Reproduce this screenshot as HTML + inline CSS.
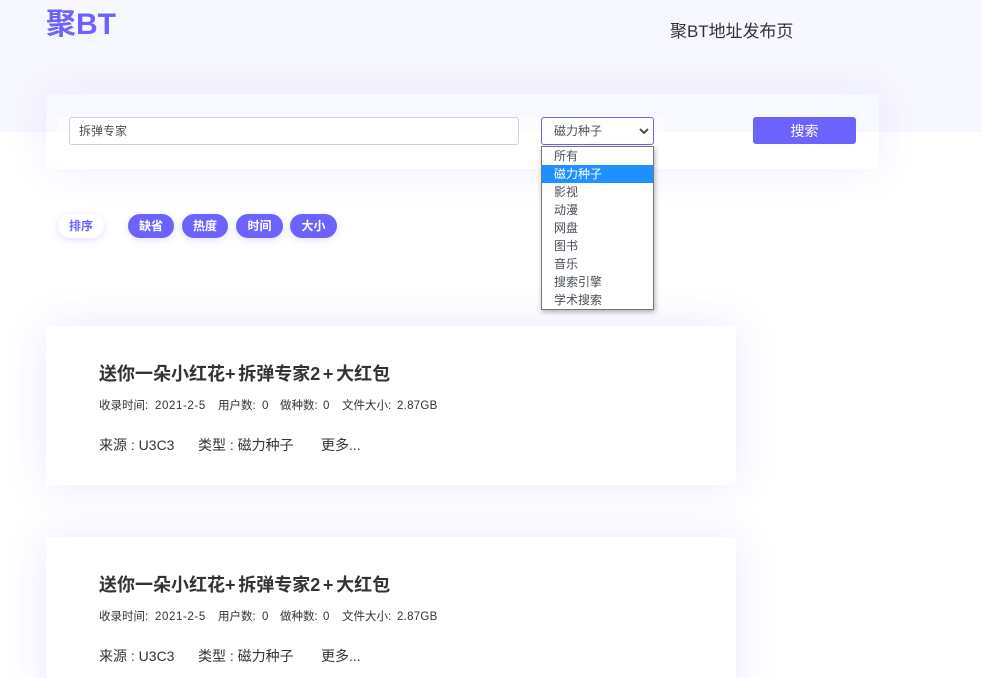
<!DOCTYPE html>
<html lang="zh"><head><meta charset="utf-8"><style>
html,body{margin:0;padding:0;width:982px;height:678px;overflow:hidden;background:#fff}
body{position:relative;font-family:"Liberation Sans","Noto Sans CJK SC",sans-serif;color:#333}
div{position:absolute;white-space:nowrap;box-sizing:border-box}
.hdr{left:0;top:0;width:982px;height:132px;background:#f7f7ff}
.logo{left:46px;top:5px;font-size:30px;line-height:40px;font-weight:700;color:#6c63ff}
.sub{left:670px;top:21px;font-size:17px;line-height:22px;color:#333;letter-spacing:-.05px}
.panel{left:46px;top:94px;width:833px;height:75px;background:rgba(255,255,255,.12);box-shadow:0 0 40px rgba(108,99,255,.11)}
.row{left:58px;top:117px;width:607px;height:28px;background:rgba(255,255,255,.55)}
.inp{left:69px;top:117px;width:450px;height:28px;background:#fff;border:1px solid #d0d0e2;border-radius:3px;font-size:12px;line-height:26px;padding-left:9px;color:#495057}
.sel{left:541px;top:117px;width:113px;height:28px;background:#fff;border:1px solid #6c63ff;border-radius:3px;font-size:12px;line-height:26px;padding-left:12px;color:#495057}
.btn{left:753px;top:117px;width:103px;height:27px;background:#6c63ff;border-radius:3px;color:#fff;font-size:14px;line-height:29px;text-align:center}
.list{left:541px;top:146px;width:113px;height:164px;background:#fff;border:1px solid #767676;box-shadow:1px 2px 5px rgba(0,0,0,.3);z-index:3}
.list div{left:0;width:111px;height:18px;font-size:12px;line-height:18px;padding-left:12px;color:#495057}
.list .on{background:#1e90ff;color:#fff}
.pill{top:214px;height:24px;border-radius:12px;background:#6c63ff;color:#fff;font-size:12px;font-weight:700;line-height:24px;text-align:center;box-shadow:0 2px 8px rgba(108,99,255,.2)}
.card{left:46px;width:690px;height:159px;background:#fff;box-shadow:0 0 40px rgba(108,99,255,.14)}
.t{left:53px;top:35px;font-size:18px;line-height:27px;font-weight:700;color:#333}
.t span{letter-spacing:2.7px}
.m{top:71px;font-size:11.5px;line-height:18px;color:#333}
.f{top:110px;font-size:14px;line-height:19px;color:#333}
</style></head><body>
<div class="hdr"></div>
<div class="logo">聚BT</div>
<div class="sub">聚BT地址发布页</div>
<div class="panel"></div>
<div class="row"></div>
<div class="inp">拆弹专家</div>
<div class="sel">磁力种子<svg style="position:absolute;left:97px;top:10px" width="10" height="6" viewBox="0 0 10 6"><path d="M1 1 5 5 9 1" fill="none" stroke="#495057" stroke-width="2"/></svg></div>
<div class="btn">搜索</div>
<div class="list">
<div style="top:0">所有</div>
<div class="on" style="top:18px">磁力种子</div>
<div style="top:36px">影视</div>
<div style="top:54px">动漫</div>
<div style="top:72px">网盘</div>
<div style="top:90px">图书</div>
<div style="top:108px">音乐</div>
<div style="top:126px">搜索引擎</div>
<div style="top:144px">学术搜索</div>
</div>
<div class="pill" style="left:58px;width:46px;background:#fff;color:#6c63ff">排序</div>
<div class="pill" style="left:128px;width:46px">缺省</div>
<div class="pill" style="left:182px;width:46px">热度</div>
<div class="pill" style="left:236px;width:47px">时间</div>
<div class="pill" style="left:290px;width:47px">大小</div>
<div class="card" style="top:326px">
<div class="t">送你一朵小红花<span>+</span>拆弹专家<span>2+</span>大红包</div>
<div class="m" style="left:53px">收录时间:</div><div class="m" style="left:109px;letter-spacing:.6px">2021-2-5</div>
<div class="m" style="left:172px">用户数:</div><div class="m" style="left:216px">0</div>
<div class="m" style="left:234px">做种数:</div><div class="m" style="left:277px">0</div>
<div class="m" style="left:296px">文件大小:</div><div class="m" style="left:351px;letter-spacing:.25px">2.87GB</div>
<div class="f" style="left:53px">来源 : U3C3</div><div class="f" style="left:152px">类型 : 磁力种子</div><div class="f" style="left:275px">更多...</div>
</div>
<div class="card" style="top:537px;height:170px">
<div class="t">送你一朵小红花<span>+</span>拆弹专家<span>2+</span>大红包</div>
<div class="m" style="left:53px">收录时间:</div><div class="m" style="left:109px;letter-spacing:.6px">2021-2-5</div>
<div class="m" style="left:172px">用户数:</div><div class="m" style="left:216px">0</div>
<div class="m" style="left:234px">做种数:</div><div class="m" style="left:277px">0</div>
<div class="m" style="left:296px">文件大小:</div><div class="m" style="left:351px;letter-spacing:.25px">2.87GB</div>
<div class="f" style="left:53px">来源 : U3C3</div><div class="f" style="left:152px">类型 : 磁力种子</div><div class="f" style="left:275px">更多...</div>
</div>
</body></html>
